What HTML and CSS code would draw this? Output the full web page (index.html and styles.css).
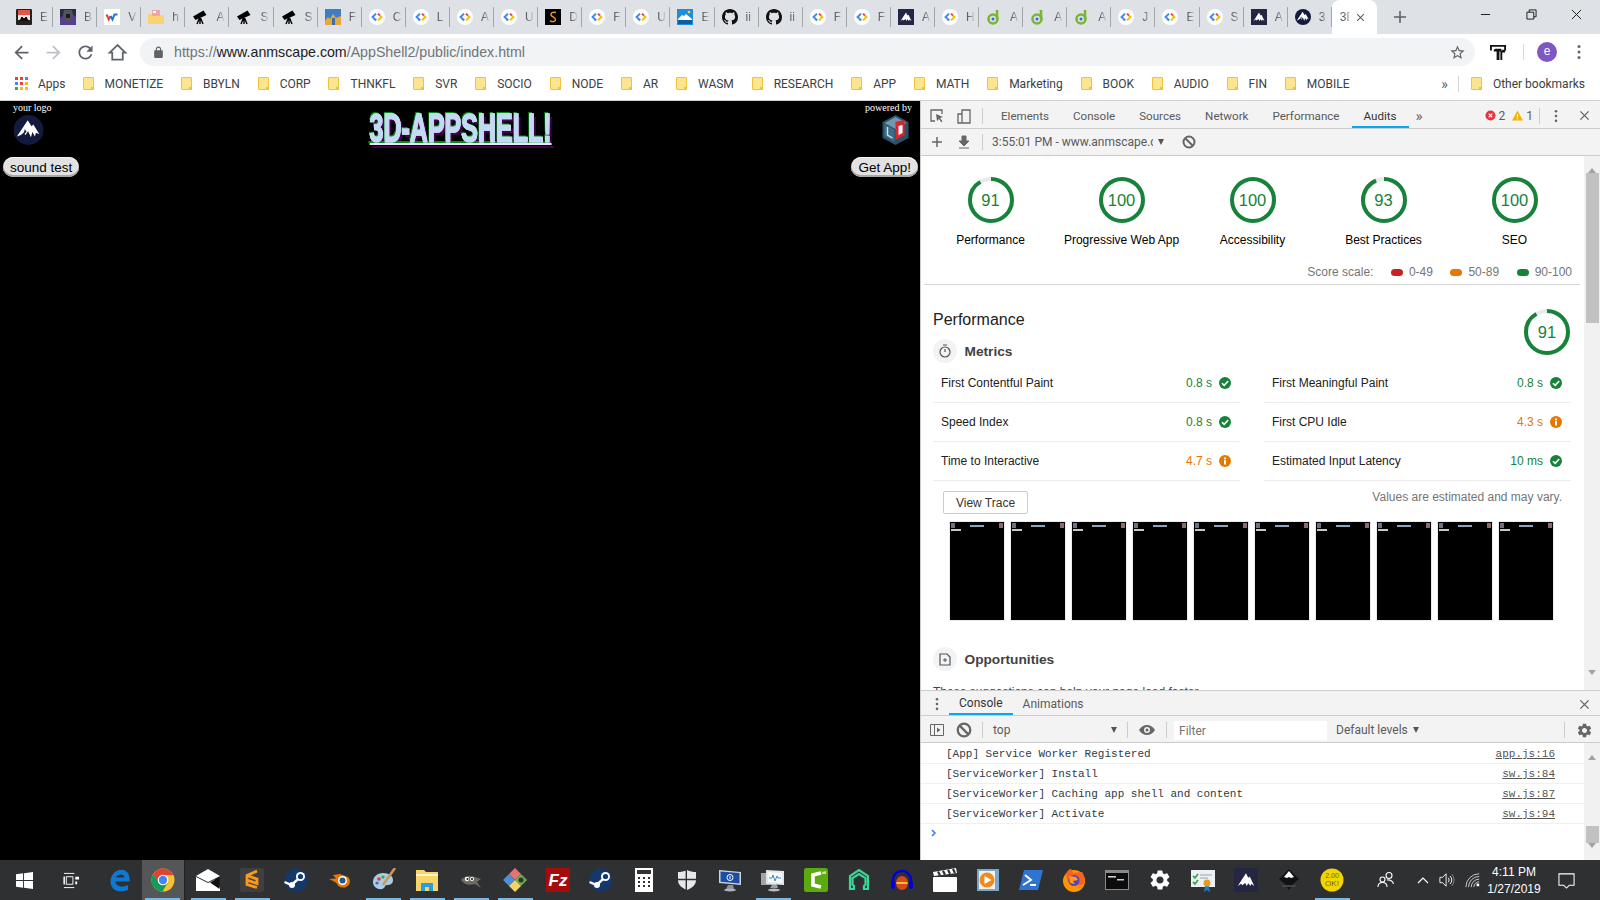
FILE: index.html
```html
<!DOCTYPE html>
<html lang="en">
<head>
  <meta charset="UTF-8">
  <title>3D-APPSHELL!</title>
  <link rel="stylesheet" href="styles.css">
</head>
<body>

  <!-- icon sprite -->
  <svg class="sprite" xmlns="http://www.w3.org/2000/svg">
    <symbol id="f-dev" viewBox="0 0 16 16"><circle cx="8" cy="8" r="8" fill="#fff"/><path d="M7 4.600L3.600 8 7 11.400" fill="none" stroke="#4285f4" stroke-width="2"/><path d="M9 4.600L11 6.600" fill="none" stroke="#ea4335" stroke-width="2"/><path d="M11 6.600L12.400 8 9 11.400" fill="none" stroke="#fbbc05" stroke-width="2"/><path d="M7 11.400L5.800 10.200" fill="none" stroke="#34a853" stroke-width="2"/></symbol>
    <symbol id="f-store" viewBox="0 0 16 16"><rect width="16" height="16" rx="1" fill="#26201f"/><rect x="2" y="1" width="12" height="5" fill="#e2574c"/><rect x="2" y="6" width="12" height="5" fill="#f4e6dc"/><path d="M3 12l2-3h6l2 3z" fill="#111"/><rect x="5" y="8" width="2" height="2" fill="#111"/><rect x="9" y="8" width="2" height="2" fill="#111"/></symbol>
    <symbol id="f-dark" viewBox="0 0 16 16"><rect width="16" height="16" fill="#2b2a44"/><path d="M0 16V9l4-3 4 4 4-5 4 3v8z" fill="#5a3f8f"/><path d="M4 1h8l1 5-3 6H6L3 6z" fill="#51565e"/><path d="M6 5h4v4H6z" fill="#1b1b22"/></symbol>
    <symbol id="f-web" viewBox="0 0 16 16"><rect width="16" height="16" rx="1" fill="#fff"/><path d="M2.500 5.500l2.300 5 1.700-3.500" fill="none" stroke="#e8412f" stroke-width="2"/><path d="M6.500 7l2 3.500 2-5 3 0" fill="none" stroke="#1a73e8" stroke-width="2"/></symbol>
    <symbol id="f-pinkfolder" viewBox="0 0 16 16"><path d="M0 5h6l1 1h9v9H0z" fill="#f9d36f"/><rect x="4" y="1" width="8" height="6" fill="#f3a3a3"/><rect x="5" y="2" width="3" height="2" fill="#fff"/></symbol>
    <symbol id="f-scope" viewBox="0 0 16 16"><path d="M1 7.500L11.500 1.500 14.500 6 3.500 11z" fill="#000"/><path d="M7.500 9L5 15M8 9v6M8.500 9l2.500 6" fill="none" stroke="#000" stroke-width="1.400"/></symbol>
    <symbol id="f-land" viewBox="0 0 16 16"><rect width="16" height="16" fill="#3f7fbf"/><path d="M0 12l3-4 2 2 3-5 3 4 5-2v9H0z" fill="#e8a93c"/><path d="M7 16V9h3v7z" fill="#3f6fa8"/></symbol>
    <symbol id="f-sub" viewBox="0 0 16 16"><rect width="16" height="16" fill="#000"/><path d="M11 3.500C8 2.600 5.500 4 6 6s4.500 2 4.500 4.500S7.500 13 5 12" fill="none" stroke="#f19a1d" stroke-width="1.400"/></symbol>
    <symbol id="f-img" viewBox="0 0 16 16"><rect width="16" height="16" fill="#1f8ed6"/><path d="M1 10l4-4 2 1 2-2 6 5v1H1z" fill="#fff"/><rect x="1" y="11" width="14" height="4" fill="#0d5f9e"/><circle cx="12" cy="3" r="1.300" fill="#ffd54f"/></symbol>
    <symbol id="f-gh" viewBox="0 0 16 16"><path d="M8 0C3.580 0 0 3.580 0 8c0 3.540 2.290 6.530 5.470 7.590.4.07.55-.17.55-.38 0-.19-.01-.82-.01-1.490-2.010.37-2.530-.49-2.690-.94-.09-.23-.48-.94-.82-1.130-.28-.15-.68-.52-.01-.53.63-.01 1.080.58 1.230.82.72 1.210 1.870.87 2.330.66.07-.52.28-.87.51-1.070-1.780-.2-3.640-.89-3.640-3.950 0-.87.31-1.590.82-2.150-.08-.2-.36-1.020.08-2.120 0 0 .67-.21 2.200.82.64-.18 1.320-.27 2-.27.68 0 1.360.09 2 .27 1.530-1.040 2.200-.82 2.200-.82.44 1.100.16 1.920.08 2.120.51.56.82 1.270.82 2.150 0 3.070-1.870 3.750-3.650 3.950.29.25.54.73.54 1.480 0 1.070-.01 1.930-.01 2.200 0 .21.15.46.55.38A8.013 8.013 0 0016 8c0-4.420-3.580-8-8-8z" fill="#111"/></symbol>
    <symbol id="f-logo" viewBox="0 0 16 16"><rect width="16" height="16" fill="#232744"/><path d="M2.500 12L8 3.500l1.500 3 1-.8L13.500 12l-2-1.500-.5 1.500-1.500-1.800-1 1.800-1-2-2 1.500-.8-1z" fill="#fff"/></symbol>
    <symbol id="f-round" viewBox="0 0 16 16"><circle cx="8" cy="8" r="8" fill="#141a3e"/><path d="M1.800 11.500L7.600 2.800l2 3.200 1-1 3.200 5.200-1.800-.8-.6 2-1.300-2.400-.8 2.900-1.500-3.300-1.500 2.200-.6-1.600-1.800 1.400z" fill="#fff"/><path d="M6 7.500l1 1.500-1.600 1.200z" fill="#141a3e"/></symbol>
    <symbol id="f-d" viewBox="0 0 16 16"><path d="M11 1v9" stroke="#7ab536" stroke-width="2.600" fill="none"/><circle cx="7" cy="10" r="4.500" fill="none" stroke="#7ab536" stroke-width="2.600"/><circle cx="7" cy="10" r="1.500" fill="#2a6fd6"/></symbol>
    <symbol id="i-folder" viewBox="0 0 11 13"><rect x=".5" y=".5" width="10" height="12" rx=".5" fill="#fde58f" stroke="#edc33f"/><rect x="8" y="10" width="3" height="3" fill="#edc33f"/></symbol>
    <symbol id="i-check" viewBox="0 0 12 12"><circle cx="6" cy="6" r="6" fill="#178239"/><path d="M3 6.200l2.200 2.200L9.200 4" fill="none" stroke="#fff" stroke-width="1.600"/></symbol>
    <symbol id="i-info" viewBox="0 0 12 12"><circle cx="6" cy="6" r="6" fill="#e67700"/><rect x="5" y="2.500" width="2" height="1.800" fill="#fff"/><rect x="5" y="5.200" width="2" height="4.300" fill="#fff"/></symbol>
    <symbol id="i-x" viewBox="0 0 12 12"><path d="M1.500 1.500l9 9M10.500 1.500l-9 9" fill="none" stroke="currentColor" stroke-width="1.500"/></symbol>
    <symbol id="i-no" viewBox="0 0 14 14"><circle cx="7" cy="7" r="5.500" fill="none" stroke="#666" stroke-width="2"/><path d="M3.200 3.200l7.600 7.600" stroke="#666" stroke-width="2"/></symbol>
    <symbol id="i-dots" viewBox="0 0 4 16"><circle cx="2" cy="2.500" r="1.500" fill="#666"/><circle cx="2" cy="8" r="1.500" fill="#666"/><circle cx="2" cy="13.500" r="1.500" fill="#666"/></symbol>

    <!-- taskbar -->
    <symbol id="t-win" viewBox="0 0 18 18"><path d="M0 2.500L7.500 1.400V8.500H0zM8.500 1.300L18 0V8.500H8.500zM0 9.500H7.500V16.600L0 15.500zM8.500 9.500H18V18L8.500 16.700z" fill="#fff"/></symbol>
    <symbol id="t-view" viewBox="0 0 18 18"><path d="M1 1.500h11M1 16.500h11M3.500 5h7v8h-7zM1 5h.5v8H1z" fill="none" stroke="#fff" stroke-width="1"/><rect x="13" y="5" width="4" height="3" fill="#fff"/><rect x="13" y="10" width="2" height="3" fill="#fff"/></symbol>
    <symbol id="t-edge" viewBox="0 0 24 24"><path d="M21.500 13.500H7.500c.3 4.800 6.800 6.500 12.500 3.500v4.700c-8 3.600-17.500.8-17.500-8C2.500 7 8 1.500 13.500 1.800c5.500.2 8.800 4.500 8 11.700zM16.500 9.500c0-4-7-4.300-8.500 0z" fill="#0f78d4" fill-rule="evenodd"/></symbol>
    <symbol id="t-chrome" viewBox="0 0 24 24"><circle cx="12" cy="12" r="11.500" fill="#fbc02d"/><path d="M12 .5A11.500 11.500 0 002.200 6L7 14.500 12 7h10.400A11.500 11.500 0 0012 .5z" fill="#db4437"/><path d="M2.200 6A11.500 11.500 0 0011.500 23.500L16.500 15H8z" fill="#0f9d58"/><circle cx="12" cy="12" r="5.300" fill="#fff"/><circle cx="12" cy="12" r="4.200" fill="#4285f4"/></symbol>
    <symbol id="t-mail" viewBox="0 0 24 24"><path d="M0 8L12 1l12 7-12 6z" fill="#fff"/><path d="M0 9l12 6 7-3.500L24 20v3H0z" fill="#fff"/><path d="M14 14.500l9.500-5.500v12z" fill="#111"/></symbol>
    <symbol id="t-sublime" viewBox="0 0 24 24"><rect width="24" height="24" rx="2" fill="#3f3f3f"/><path d="M17 4L7 8.500v4.500l10 3.500V12L7 8.500M7 13v4.500l10 3" transform="translate(0 -1)" fill="none" stroke="#f79a1f" stroke-width="2.800"/></symbol>
    <symbol id="t-steam" viewBox="0 0 24 24"><circle cx="12" cy="12" r="11.500" fill="#14386a"/><path d="M.5 14l7 3 6-5.500 5-2" stroke="#fff" stroke-width="2.400" fill="none"/><circle cx="16.500" cy="8.500" r="4.500" fill="#fff"/><circle cx="16.500" cy="8.500" r="2.600" fill="#14386a"/><circle cx="8" cy="17" r="3" fill="#fff"/></symbol>
    <symbol id="t-blender" viewBox="0 0 24 24"><path d="M1 11l7-.5L5 7l7-1 8 3c3 3 2.500 8-2 10-4 1.500-8 0-9.500-4L5 13z" fill="#ea7600"/><circle cx="14.500" cy="12.500" r="4.500" fill="#fff"/><circle cx="14.500" cy="12.500" r="3" fill="#265787"/></symbol>
    <symbol id="t-paint" viewBox="0 0 24 24"><path d="M11 5C5 5 1 9 1 14s5 8 9 7 2-4 5-4 6-1 6-5-4-7-10-7z" fill="#a9cde6"/><circle cx="7" cy="11" r="1.800" fill="#d83b3b"/><circle cx="11" cy="9" r="1.600" fill="#3f9e4d"/><circle cx="5" cy="15" r="1.600" fill="#2f6fd0"/><path d="M23 0L11 17" stroke="#c89b5b" stroke-width="2.600"/></symbol>
    <symbol id="t-explorer" viewBox="0 0 24 24"><path d="M1 2h8l2 2h12v19H1z" fill="#f6d66b"/><rect x="1" y="6" width="22" height="2" fill="#fff3c4"/><path d="M6 23v-8h12v8h-4v-4h-4v4z" fill="#2c9cdb"/></symbol>
    <symbol id="t-gimp" viewBox="0 0 24 24"><path d="M2 12c3-4 9-5 14-3l6 2-4 3 4 6-6-4c-4 1-9 1-11-1z" fill="#6e6b62"/><circle cx="8" cy="11" r="2.200" fill="#fff"/><circle cx="13" cy="11" r="2" fill="#fff"/><circle cx="8.500" cy="11" r="1" fill="#111"/><circle cx="13" cy="11" r="1" fill="#111"/></symbol>
    <symbol id="t-git" viewBox="0 0 24 24"><path d="M12 0l6 6-6 6-6-6z" fill="#e57373"/><path d="M6 6l6 6-6 6-6-6z" fill="#4a90d9"/><path d="M18 6l6 6-6 6-6-6z" fill="#6fae4c"/><path d="M12 12l6 6-6 6-6-6z" fill="#f2d36b"/><circle cx="18" cy="12" r="2.500" fill="#333"/></symbol>
    <symbol id="t-fz" viewBox="0 0 24 24"><rect width="24" height="24" fill="#a50d0d"/><text x="12" y="18" text-anchor="middle" font-family="Liberation Sans" font-style="italic" font-weight="700" font-size="17" fill="#fff">Fz</text></symbol>
    <symbol id="t-calc" viewBox="0 0 18 24"><rect width="18" height="24" fill="#fff"/><rect x="2" y="2" width="14" height="4" fill="#333"/><path d="M3 9h2v2H3zM8 9h2v2H8zM13 9h2v2h-2zM3 13h2v2H3zM8 13h2v2H8zM13 13h2v2h-2zM3 17h2v2H3zM8 17h2v2H8zM13 17h2v2h-2z" fill="#333"/></symbol>
    <symbol id="t-shield" viewBox="0 0 18 20"><path d="M9 0c3 1.500 6 2 9 2v8c0 5-4 8-9 10-5-2-9-5-9-10V2c3 0 6-.5 9-2z" fill="#e8e8e8"/><path d="M8.300 0v20M0 9.500h18" stroke="#2f3032" stroke-width="1.400"/></symbol>
    <symbol id="t-monitor" viewBox="0 0 24 24"><path d="M1 2l22 2v13L1 15z" fill="#cfd4da"/><path d="M2.500 3.500l19 1.600v10.300L2.500 13.800z" fill="#1b4ea8"/><circle cx="12" cy="9.500" r="3" fill="none" stroke="#fff"/><path d="M12 8v3" stroke="#fff"/><path d="M10 17h5l1 4H8z" fill="#8d9299"/><ellipse cx="12" cy="22" rx="6" ry="1.500" fill="#aeb3b8"/></symbol>
    <symbol id="t-perf" viewBox="0 0 24 24"><rect x="0" y="5" width="15" height="12" fill="#9fa5a9"/><path d="M5 2l18 1v14L5 16z" fill="#e3e6e8"/><path d="M7 4l14 1v10L7 14z" fill="#f6f8f9"/><path d="M8 10h3l1-3 2 6 2-5 1 2h3" fill="none" stroke="#3b8cc4"/><path d="M11 17h5l1 3H9z" fill="#9a9fa4"/><ellipse cx="13" cy="22" rx="6" ry="1.500" fill="#b9bdc1"/></symbol>
    <symbol id="t-cam" viewBox="0 0 24 24"><rect width="24" height="24" rx="2.500" fill="#5aaa10"/><path d="M17 5L9 7v10l8 2" fill="none" stroke="#fff" stroke-width="3.600"/><path d="M18 4l4-1v3h-4z" fill="#c6e68b"/></symbol>
    <symbol id="t-arch" viewBox="0 0 24 24"><path d="M3 21V8l9-6 9 6v13h-4v-3l1.500-1.500V10L12 6l-6.500 4v6.500L7 18v3z" fill="none" stroke="#38d996" stroke-width="2.200"/></symbol>
    <symbol id="t-audacity" viewBox="0 0 24 24"><path d="M3 19v-7a9 9 0 0118 0v7" fill="none" stroke="#0000d8" stroke-width="2.400"/><rect x="1" y="13" width="4" height="8" rx="2" fill="#0000d8"/><rect x="19" y="13" width="4" height="8" rx="2" fill="#0000d8"/><ellipse cx="12" cy="15" rx="6" ry="7" fill="#d8461a"/><path d="M6.500 15h11" stroke="#f4c430" stroke-width="2"/></symbol>
    <symbol id="t-clap" viewBox="0 0 24 24"><rect y="9" width="24" height="15" rx="1" fill="#fff"/><path d="M0 4l23-4 1 5-23 3z" fill="#fff"/><path d="M5 3.500l2 4M10 2.700l2 4M15 1.800l2 4M20 1l2 4" stroke="#2f3032" stroke-width="2.200"/></symbol>
    <symbol id="t-media" viewBox="0 0 24 24"><rect x="1" y="1" width="22" height="22" fill="#7ca7c9"/><rect x="3" y="3" width="16" height="18" fill="#f1f1f1"/><circle cx="11" cy="12" r="7.500" fill="#f18a1c"/><path d="M8.500 8l7 4-7 4z" fill="#fff"/></symbol>
    <symbol id="t-ps" viewBox="0 0 24 24"><path d="M5 2h19l-5 20H0z" fill="#2f74d0"/><path d="M6 7l6 5-8 5M11 17h6" fill="none" stroke="#fff" stroke-width="2"/></symbol>
    <symbol id="t-fox" viewBox="0 0 24 24"><circle cx="12" cy="13" r="11" fill="#ff9500"/><path d="M4 6c1-3 3-5 5-5l2 4 9-1c3 4 3 9 1 13H9c-3-3-5-7-5-11z" fill="#f5631f"/><circle cx="12" cy="12.500" r="5.500" fill="#5e3fbe"/><path d="M7 8l7 1 2 3-5 1 2 3-5-1z" fill="#ff9d1f"/></symbol>
    <symbol id="t-cmd" viewBox="0 0 24 24"><rect width="24" height="20" y="2" fill="#8a8a8a"/><rect x="1" y="5" width="22" height="16" fill="#0c0c0c"/><rect x="3" y="8" width="8" height="1.600" fill="#ccc"/><rect x="12" y="11" width="7" height="1.500" fill="#ccc"/></symbol>
    <symbol id="t-gear" viewBox="0 0 24 24"><path d="M19.140 12.940c.04-.3.06-.61.06-.94 0-.32-.02-.64-.07-.94l2.030-1.580a.49.49 0 00.12-.61l-1.920-3.320a.488.488 0 00-.59-.22l-2.390.96c-.5-.38-1.030-.7-1.620-.94l-.36-2.540a.484.484 0 00-.48-.41h-3.840c-.24 0-.43.17-.47.41l-.36 2.540c-.59.24-1.130.57-1.620.94l-2.390-.96c-.22-.08-.47 0-.59.22L2.740 8.870c-.12.21-.08.47.12.61l2.030 1.580c-.05.3-.09.63-.09.94s.02.64.07.94l-2.030 1.580a.49.49 0 00-.12.61l1.920 3.320c.12.22.37.29.59.22l2.390-.96c.5.38 1.030.7 1.620.94l.36 2.540c.05.24.24.41.48.41h3.840c.24 0 .44-.17.47-.41l.36-2.540c.59-.24 1.130-.56 1.620-.94l2.390.96c.22.08.47 0 .59-.22l1.920-3.320c.12-.22.07-.47-.12-.61l-2.010-1.580zM12 15.600c-1.980 0-3.600-1.620-3.600-3.600s1.620-3.600 3.600-3.600 3.600 1.620 3.600 3.600-1.620 3.600-3.600 3.600z" fill="currentColor"/></symbol>
    <symbol id="t-cert" viewBox="0 0 24 24"><rect y="2" width="24" height="17" fill="#eef1f3"/><path d="M2 8l2 2 3-4M2 14l2 2 3-4" fill="none" stroke="#3fa64a" stroke-width="1.800"/><path d="M9 7h12M9 10h8" stroke="#9aa3aa"/><path d="M14 18l-1 6 3-2 3 2-1-6z" fill="#1f7ac4"/><circle cx="16" cy="15" r="3.500" fill="#e69a1f"/></symbol>
    <symbol id="t-ink" viewBox="0 0 24 24"><path d="M12 1l10 10-6 5-4 6-4-6-6-5z" fill="#111"/><path d="M12 3l5 6-3 1-2-1-2 1-3-1z" fill="#fff"/><path d="M5 18h14" stroke="#444" stroke-width="2"/></symbol>
    <symbol id="t-ok" viewBox="0 0 24 24"><circle cx="12" cy="12" r="11.500" fill="#f2d400"/><text x="12" y="10" text-anchor="middle" font-family="Liberation Sans" font-size="7" fill="#6f6a00">2.00</text><text x="12" y="18" text-anchor="middle" font-family="Liberation Sans" font-size="8" fill="#6f6a00">OK!</text></symbol>
    <symbol id="t-people" viewBox="0 0 18 18"><g fill="none" stroke="#fff" stroke-width="1.100"><circle cx="12" cy="4.500" r="3"/><circle cx="5.500" cy="8.500" r="2.500"/><path d="M1 16c0-3 2-4.500 4.500-4.500S10 13 10 16M10 9c3-.5 6 1 6.500 4"/></g></symbol>
    <symbol id="t-speaker" viewBox="0 0 18 18"><path d="M1 6h3l4-4v14l-4-4H1z" fill="none" stroke="#fff"/><path d="M10.500 6.500a4 4 0 010 5M12.500 4.500a7 7 0 010 9" fill="none" stroke="#fff"/><path d="M14.500 2.500a10 10 0 010 13" fill="none" stroke="#888"/></symbol>
    <symbol id="t-wifi" viewBox="0 0 18 18"><path d="M1 16A15 15 0 0116 1M4 16A12 12 0 0116 4M7 16A9 9 0 0116 7M10 16a6 6 0 016-6" fill="none" stroke="#d8d8d8" transform="translate(0 1)"/><rect x="13" y="13" width="3" height="3" fill="#fff"/></symbol>
    <symbol id="t-action" viewBox="0 0 18 18"><path d="M1 2h16v12h-5l-3 3-3-3H1z" fill="none" stroke="#fff" stroke-width="1.100"/></symbol>
  </svg>

  <!-- BROWSER: tab strip -->
  <div class="tabstrip">
    <div class="tab"><svg class="fav"><use href="#f-store"/></svg><span class="tab-title">E</span></div>
    <div class="tab"><svg class="fav"><use href="#f-dark"/></svg><span class="tab-title">B</span></div>
    <div class="tab"><svg class="fav"><use href="#f-web"/></svg><span class="tab-title">V</span></div>
    <div class="tab"><svg class="fav"><use href="#f-pinkfolder"/></svg><span class="tab-title">h</span></div>
    <div class="tab"><svg class="fav"><use href="#f-scope"/></svg><span class="tab-title">A</span></div>
    <div class="tab"><svg class="fav"><use href="#f-scope"/></svg><span class="tab-title">S</span></div>
    <div class="tab"><svg class="fav"><use href="#f-scope"/></svg><span class="tab-title">S</span></div>
    <div class="tab"><svg class="fav"><use href="#f-land"/></svg><span class="tab-title">F</span></div>
    <div class="tab"><svg class="fav"><use href="#f-dev"/></svg><span class="tab-title">C</span></div>
    <div class="tab"><svg class="fav"><use href="#f-dev"/></svg><span class="tab-title">L</span></div>
    <div class="tab"><svg class="fav"><use href="#f-dev"/></svg><span class="tab-title">A</span></div>
    <div class="tab"><svg class="fav"><use href="#f-dev"/></svg><span class="tab-title">U</span></div>
    <div class="tab"><svg class="fav"><use href="#f-sub"/></svg><span class="tab-title">D</span></div>
    <div class="tab"><svg class="fav"><use href="#f-dev"/></svg><span class="tab-title">F</span></div>
    <div class="tab"><svg class="fav"><use href="#f-dev"/></svg><span class="tab-title">U</span></div>
    <div class="tab"><svg class="fav"><use href="#f-img"/></svg><span class="tab-title">E</span></div>
    <div class="tab"><svg class="fav"><use href="#f-gh"/></svg><span class="tab-title">ii</span></div>
    <div class="tab"><svg class="fav"><use href="#f-gh"/></svg><span class="tab-title">ii</span></div>
    <div class="tab"><svg class="fav"><use href="#f-dev"/></svg><span class="tab-title">F</span></div>
    <div class="tab"><svg class="fav"><use href="#f-dev"/></svg><span class="tab-title">F</span></div>
    <div class="tab"><svg class="fav"><use href="#f-logo"/></svg><span class="tab-title">A</span></div>
    <div class="tab"><svg class="fav"><use href="#f-dev"/></svg><span class="tab-title">H</span></div>
    <div class="tab"><svg class="fav"><use href="#f-d"/></svg><span class="tab-title">A</span></div>
    <div class="tab"><svg class="fav"><use href="#f-d"/></svg><span class="tab-title">A</span></div>
    <div class="tab"><svg class="fav"><use href="#f-d"/></svg><span class="tab-title">A</span></div>
    <div class="tab"><svg class="fav"><use href="#f-dev"/></svg><span class="tab-title">J</span></div>
    <div class="tab"><svg class="fav"><use href="#f-dev"/></svg><span class="tab-title">E</span></div>
    <div class="tab"><svg class="fav"><use href="#f-dev"/></svg><span class="tab-title">S</span></div>
    <div class="tab"><svg class="fav"><use href="#f-logo"/></svg><span class="tab-title">A</span></div>
    <div class="tab"><svg class="fav"><use href="#f-round"/></svg><span class="tab-title">3</span></div>
    <div class="tab-active"><span class="tab-title">3D</span><svg class="tab-close"><use href="#i-x"/></svg></div>
    <svg class="new-tab" viewBox="0 0 12 12"><path d="M6 0v12M0 6h12" stroke="#5f6368" stroke-width="1.600"/></svg>
    <div class="win-controls">
      <svg class="win-btn" viewBox="0 0 12 12"><path d="M1 6h10" stroke="#111"/></svg>
      <svg class="win-btn" viewBox="0 0 12 12"><path d="M1 3.500h7.500V11H1zM3.500 3.500V1H11v7.500H8.500" fill="none" stroke="#111"/></svg>
      <svg class="win-btn" viewBox="0 0 12 12"><path d="M1 1l10 10M11 1L1 11" stroke="#111"/></svg>
    </div>
  </div>

  <!-- BROWSER: address bar -->
  <div class="toolbar">
    <svg class="nav-btn" viewBox="0 0 24 24"><path d="M20 11H7.830l5.590-5.590L12 4l-8 8 8 8 1.410-1.410L7.830 13H20v-2z" fill="#5f6368"/></svg>
    <svg class="nav-btn" viewBox="0 0 24 24"><path d="M4 11h12.170l-5.590-5.590L12 4l8 8-8 8-1.410-1.410L16.170 13H4v-2z" fill="#bdc1c6"/></svg>
    <svg class="nav-btn" viewBox="0 0 24 24"><path d="M17.650 6.350C16.200 4.900 14.210 4 12 4c-4.420 0-7.990 3.580-7.990 8s3.570 8 7.990 8c3.730 0 6.840-2.550 7.730-6h-2.080c-.82 2.330-3.040 4-5.650 4-3.310 0-6-2.690-6-6s2.690-6 6-6c1.660 0 3.140.69 4.220 1.780L13 11h7V4l-2.350 2.350z" fill="#5f6368"/></svg>
    <svg class="nav-btn" viewBox="0 0 24 24"><path d="M12 3.500L3 12h3v8h12v-8h3z" fill="none" stroke="#5f6368" stroke-width="2"/></svg>
    <div class="omnibox">
      <svg class="lock" viewBox="0 0 24 24"><path d="M18 8h-1V6c0-2.760-2.240-5-5-5S7 3.240 7 6v2H6c-1.100 0-2 .9-2 2v10c0 1.100.9 2 2 2h12c1.100 0 2-.9 2-2V10c0-1.100-.9-2-2-2zM9 6c0-1.660 1.340-3 3-3s3 1.340 3 3v2H9V6z" fill="#5f6368"/></svg>
      <span class="url">https://<b>www.anmscape.com</b>/AppShell2/public/index.html</span>
      <svg class="star" viewBox="0 0 24 24"><path d="M22 9.240l-7.190-.62L12 2 9.190 8.630 2 9.240l5.460 4.730L5.820 21 12 17.270 18.180 21l-1.630-7.030L22 9.240zM12 15.400l-3.760 2.270 1-4.280-3.320-2.880 4.380-.38L12 6.100l1.710 4.040 4.380.38-3.320 2.880 1 4.280L12 15.400z" fill="#5f6368"/></svg>
    </div>
    <svg class="ext" viewBox="0 0 18 18"><path d="M0 1h17v6h-2V3H2v4H0zM6 5h6v3h-2v9H7V8H4V6z" fill="#111"/><path d="M13 6h3v3h-3v8h-2V7h2z" fill="#111"/></svg>
    <span class="tool-div"></span>
    <span class="avatar">e</span>
    <svg class="menu-dots"><use href="#i-dots"/></svg>
  </div>

  <!-- BROWSER: bookmarks -->
  <div class="bookmarks">
    <svg class="apps" viewBox="0 0 13 13"><rect width="3" height="3" fill="#ea4335"/><rect x="5" width="3" height="3" fill="#ea4335"/><rect x="10" width="3" height="3" fill="#4285f4"/><rect y="5" width="3" height="3" fill="#4285f4"/><rect x="5" y="5" width="3" height="3" fill="#ea4335"/><rect x="10" y="5" width="3" height="3" fill="#fbbc05"/><rect y="10" width="3" height="3" fill="#34a853"/><rect x="5" y="10" width="3" height="3" fill="#fbbc05"/><rect x="10" y="10" width="3" height="3" fill="#fbbc05"/></svg>
    <span class="bm-apps">Apps</span>
    <div class="bm"><svg class="folder"><use href="#i-folder"/></svg>MONETIZE</div>
    <div class="bm"><svg class="folder"><use href="#i-folder"/></svg>BBYLN</div>
    <div class="bm"><svg class="folder"><use href="#i-folder"/></svg>CORP</div>
    <div class="bm"><svg class="folder"><use href="#i-folder"/></svg>THNKFL</div>
    <div class="bm"><svg class="folder"><use href="#i-folder"/></svg>SVR</div>
    <div class="bm"><svg class="folder"><use href="#i-folder"/></svg>SOCIO</div>
    <div class="bm"><svg class="folder"><use href="#i-folder"/></svg>NODE</div>
    <div class="bm"><svg class="folder"><use href="#i-folder"/></svg>AR</div>
    <div class="bm"><svg class="folder"><use href="#i-folder"/></svg>WASM</div>
    <div class="bm"><svg class="folder"><use href="#i-folder"/></svg>RESEARCH</div>
    <div class="bm"><svg class="folder"><use href="#i-folder"/></svg>APP</div>
    <div class="bm"><svg class="folder"><use href="#i-folder"/></svg>MATH</div>
    <div class="bm"><svg class="folder"><use href="#i-folder"/></svg>Marketing</div>
    <div class="bm"><svg class="folder"><use href="#i-folder"/></svg>BOOK</div>
    <div class="bm"><svg class="folder"><use href="#i-folder"/></svg>AUDIO</div>
    <div class="bm"><svg class="folder"><use href="#i-folder"/></svg>FIN</div>
    <div class="bm"><svg class="folder"><use href="#i-folder"/></svg>MOBILE</div>
    <div class="bm-end">
      <span class="bm-more">»</span>
      <span class="tool-div"></span>
      <div class="bm"><svg class="folder"><use href="#i-folder"/></svg>Other bookmarks</div>
    </div>
  </div>

  <div class="main">

    <!-- the page -->
    <div class="app">
      <div class="brand-col">
        <span class="brand-label">your logo</span>
        <svg class="brand-icon" viewBox="0 0 16 16"><use href="#f-round"/></svg>
        <button class="app-btn">sound test</button>
      </div>
      <h1 class="app-title">3D-APPSHELL!</h1>
      <div class="brand-col brand-right">
        <span class="brand-label">powered by</span>
        <svg class="brand-icon" viewBox="0 0 30 30"><path d="M15 0l13 7v16l-13 7-13-7V7z" fill="#2d5068"/><path d="M15 2l11 6-11 6L4 8z" fill="#6f97ad"/><path d="M4 9l10 6v12L4 21z" fill="#3d6c86"/><path d="M15 7l9-2v15l-9 5z" fill="#d7262b"/><path d="M18 11l4-1v8l-4 2z" fill="#fff"/><path d="M7 12v8l5 3" fill="none" stroke="#cfe0ea" stroke-width="1.400"/></svg>
        <button class="app-btn">Get App!</button>
      </div>
    </div>

    <!-- devtools -->
    <div class="devtools">
      <div class="dt-bar dt-tabs">
        <span class="dt-btn"><svg viewBox="0 0 16 16"><path d="M6 13H2V2h11v4" fill="none" stroke="#666" stroke-width="1.300"/><path d="M7 6l7 3-3 1 2.500 3.500-1.200.8L10 11l-2 2z" fill="#666"/></svg></span>
        <span class="dt-btn"><svg viewBox="0 0 16 16"><path d="M6 2h8v13H6zM6 6H2v9h4" fill="none" stroke="#666" stroke-width="1.300"/></svg></span>
        <span class="dt-div dt-div-first"></span>
        <span class="dt-tab">Elements</span>
        <span class="dt-tab">Console</span>
        <span class="dt-tab">Sources</span>
        <span class="dt-tab">Network</span>
        <span class="dt-tab">Performance</span>
        <span class="dt-tab dt-tab-on">Audits</span>
        <span class="dt-more">»</span>
        <div class="dt-right">
          <svg class="err-icon" viewBox="0 0 12 12"><circle cx="6" cy="6" r="5.500" fill="#e8333a"/><path d="M4 4l4 4M8 4l-4 4" stroke="#fff" stroke-width="1.300"/></svg>
          <span class="err-count">2</span>
          <svg class="err-icon" viewBox="0 0 12 12"><path d="M6 .5L12 11.500H0z" fill="#f4b400"/><path d="M6 4.500v3.500M6 9v1.200" stroke="#fff" stroke-width="1.300"/></svg>
          <span class="err-count">1</span>
          <span class="dt-div"></span>
          <svg class="dt-dots"><use href="#i-dots"/></svg>
          <svg class="dt-close"><use href="#i-x"/></svg>
        </div>
      </div>
      <div class="dt-bar dt-sub">
        <span class="dt-btn"><svg viewBox="0 0 16 16"><path d="M8 3v10M3 8h10" stroke="#666" stroke-width="1.500"/></svg></span>
        <span class="dt-btn"><svg viewBox="0 0 16 16"><path d="M6 2h4v5h3l-5 5-5-5h3zM3 14h10" fill="#666" stroke="#666"/></svg></span>
        <span class="dt-div dt-div-first"></span>
        <span class="report-select">3:55:01 PM - www.anmscape.com</span>
        <span class="caret"></span>
        <svg class="no-icon"><use href="#i-no"/></svg>
      </div>

      <div class="report-wrap">
        <div class="report">
          <div class="gauges">
            <div class="gauge-col">
              <div class="gauge"><svg viewBox="0 0 46 46"><circle class="g-track" cx="23" cy="23" r="21"/><circle class="g-fill" cx="23" cy="23" r="21" stroke-dasharray="120 132"/></svg><span class="g-num">91</span></div>
              <div class="g-label">Performance</div>
            </div>
            <div class="gauge-col">
              <div class="gauge"><svg viewBox="0 0 46 46"><circle class="g-track" cx="23" cy="23" r="21"/><circle class="g-fill" cx="23" cy="23" r="21" stroke-dasharray="132 132"/></svg><span class="g-num">100</span></div>
              <div class="g-label">Progressive Web App</div>
            </div>
            <div class="gauge-col">
              <div class="gauge"><svg viewBox="0 0 46 46"><circle class="g-track" cx="23" cy="23" r="21"/><circle class="g-fill" cx="23" cy="23" r="21" stroke-dasharray="132 132"/></svg><span class="g-num">100</span></div>
              <div class="g-label">Accessibility</div>
            </div>
            <div class="gauge-col">
              <div class="gauge"><svg viewBox="0 0 46 46"><circle class="g-track" cx="23" cy="23" r="21"/><circle class="g-fill" cx="23" cy="23" r="21" stroke-dasharray="123 132"/></svg><span class="g-num">93</span></div>
              <div class="g-label">Best Practices</div>
            </div>
            <div class="gauge-col">
              <div class="gauge"><svg viewBox="0 0 46 46"><circle class="g-track" cx="23" cy="23" r="21"/><circle class="g-fill" cx="23" cy="23" r="21" stroke-dasharray="132 132"/></svg><span class="g-num">100</span></div>
              <div class="g-label">SEO</div>
            </div>
          </div>
          <div class="scale">
            <span>Score scale:</span>
            <span class="scale-item"><i class="pill pill-red"></i>0-49</span>
            <span class="scale-item"><i class="pill pill-orange"></i>50-89</span>
            <span class="scale-item"><i class="pill pill-green"></i>90-100</span>
          </div>

          <div class="cat-head">
            <div>
              <h2 class="cat-title">Performance</h2>
              <div class="group-head"><span class="group-icon"><svg viewBox="0 0 14 14"><circle cx="7" cy="8" r="5" fill="none" stroke="#555" stroke-width="1.200"/><path d="M5 1h4M7 5v3" stroke="#555" stroke-width="1.200"/></svg></span>Metrics</div>
            </div>
            <div class="gauge"><svg viewBox="0 0 46 46"><circle class="g-track" cx="23" cy="23" r="21"/><circle class="g-fill" cx="23" cy="23" r="21" stroke-dasharray="120 132"/></svg><span class="g-num">91</span></div>
          </div>

          <div class="metrics">
            <div class="metric"><span>First Contentful Paint</span><span class="val-good">0.8 s</span><svg class="m-icon"><use href="#i-check"/></svg></div>
            <div class="metric"><span>First Meaningful Paint</span><span class="val-good">0.8 s</span><svg class="m-icon"><use href="#i-check"/></svg></div>
            <div class="metric"><span>Speed Index</span><span class="val-good">0.8 s</span><svg class="m-icon"><use href="#i-check"/></svg></div>
            <div class="metric"><span>First CPU Idle</span><span class="val-avg">4.3 s</span><svg class="m-icon"><use href="#i-info"/></svg></div>
            <div class="metric"><span>Time to Interactive</span><span class="val-avg">4.7 s</span><svg class="m-icon"><use href="#i-info"/></svg></div>
            <div class="metric"><span>Estimated Input Latency</span><span class="val-good">10 ms</span><svg class="m-icon"><use href="#i-check"/></svg></div>
          </div>

          <div class="trace-row">
            <button class="trace-btn">View Trace</button>
            <span class="estimate">Values are estimated and may vary.</span>
          </div>

          <div class="film">
            <div class="thumb"><div class="thumb-top"><i></i><i class="t-title"></i><i class="t-cube"></i></div><i class="t-pill"></i></div>
            <div class="thumb"><div class="thumb-top"><i></i><i class="t-title"></i><i class="t-cube"></i></div><i class="t-pill"></i></div>
            <div class="thumb"><div class="thumb-top"><i></i><i class="t-title"></i><i class="t-cube"></i></div><i class="t-pill"></i></div>
            <div class="thumb"><div class="thumb-top"><i></i><i class="t-title"></i><i class="t-cube"></i></div><i class="t-pill"></i></div>
            <div class="thumb"><div class="thumb-top"><i></i><i class="t-title"></i><i class="t-cube"></i></div><i class="t-pill"></i></div>
            <div class="thumb"><div class="thumb-top"><i></i><i class="t-title"></i><i class="t-cube"></i></div><i class="t-pill"></i></div>
            <div class="thumb"><div class="thumb-top"><i></i><i class="t-title"></i><i class="t-cube"></i></div><i class="t-pill"></i></div>
            <div class="thumb"><div class="thumb-top"><i></i><i class="t-title"></i><i class="t-cube"></i></div><i class="t-pill"></i></div>
            <div class="thumb"><div class="thumb-top"><i></i><i class="t-title"></i><i class="t-cube"></i></div><i class="t-pill"></i></div>
            <div class="thumb"><div class="thumb-top"><i></i><i class="t-title"></i><i class="t-cube"></i></div><i class="t-pill"></i></div>
          </div>

          <div class="group-head group-opp"><span class="group-icon"><svg viewBox="0 0 14 14"><path d="M2 2h7l3 3v8H2z" fill="none" stroke="#555" stroke-width="1.200"/><path d="M7 6v4M5 8h4" stroke="#555"/></svg></span>Opportunities</div>
          <p class="opp-desc">These suggestions can help your page load faster.</p>
        </div>
        <div class="vbar">
          <span class="sb-up"></span>
          <span class="sb-thumb sb-thumb-report"></span>
          <span class="sb-down sb-down-report"></span>
        </div>
      </div>

      <!-- console drawer -->
      <div class="dt-bar drawer-tabs">
        <svg class="drawer-dots"><use href="#i-dots"/></svg>
        <span class="dt-tab dt-tab-on drawer-tab">Console</span>
        <span class="dt-tab drawer-tab">Animations</span>
        <svg class="dt-close drawer-close"><use href="#i-x"/></svg>
      </div>
      <div class="dt-bar con-bar">
        <span class="dt-btn"><svg viewBox="0 0 16 16"><path d="M1.500 2.500h13v11h-13zM5.500 2.500v11" fill="none" stroke="#666"/><path d="M8 5.500l3.500 2.500L8 10.500z" fill="#666"/></svg></span>
        <span class="dt-btn"><svg class="no-inner"><use href="#i-no"/></svg></span>
        <span class="dt-div dt-div-first"></span>
        <div class="ctx-select"><span>top</span><span class="caret"></span></div>
        <span class="dt-div"></span>
        <svg class="eye" viewBox="0 0 16 16"><path d="M0 8c2-3.500 5-5 8-5s6 1.500 8 5c-2 3.500-5 5-8 5s-6-1.500-8-5z" fill="#666"/><circle cx="8" cy="8" r="3" fill="#f3f3f3"/><circle cx="8" cy="8" r="1.500" fill="#666"/></svg>
        <span class="dt-div"></span>
        <span class="filter">Filter</span>
        <span class="levels">Default levels</span>
        <span class="caret"></span>
        <span class="dt-div dt-div-gear"></span>
        <svg class="con-gear"><use href="#t-gear"/></svg>
      </div>
      <div class="con-wrap">
        <div class="con-log">
          <div class="msg"><span>[App] Service Worker Registered</span><a class="msg-src">app.js:16</a></div>
          <div class="msg"><span>[ServiceWorker] Install</span><a class="msg-src">sw.js:84</a></div>
          <div class="msg"><span>[ServiceWorker] Caching app shell and content</span><a class="msg-src">sw.js:87</a></div>
          <div class="msg"><span>[ServiceWorker] Activate</span><a class="msg-src">sw.js:94</a></div>
          <svg class="prompt" viewBox="0 0 6 8"><path d="M1 1l3 3-3 3" fill="none" stroke="#367cf1" stroke-width="1.500"/></svg>
        </div>
        <div class="vbar">
          <span class="sb-up"></span>
          <span class="sb-thumb sb-thumb-con"></span>
          <span class="sb-down"></span>
        </div>
      </div>
    </div>
  </div>

  <!-- windows taskbar -->
  <div class="taskbar">
    <span class="tb-start"><svg class="tb-small"><use href="#t-win"/></svg></span>
    <span class="tb-view"><svg class="tb-small"><use href="#t-view"/></svg></span>
    <div class="tb-group">
      <span class="tb-item"><svg class="tb-icon"><use href="#t-edge"/></svg></span>
      <span class="tb-item tb-active run"><svg class="tb-icon"><use href="#t-chrome"/></svg></span>
      <span class="tb-item run"><svg class="tb-icon"><use href="#t-mail"/></svg></span>
      <span class="tb-item run"><svg class="tb-icon"><use href="#t-sublime"/></svg></span>
      <span class="tb-item"><svg class="tb-icon"><use href="#t-steam"/></svg></span>
      <span class="tb-item"><svg class="tb-icon"><use href="#t-blender"/></svg></span>
      <span class="tb-item run"><svg class="tb-icon"><use href="#t-paint"/></svg></span>
      <span class="tb-item run"><svg class="tb-icon"><use href="#t-explorer"/></svg></span>
      <span class="tb-item run"><svg class="tb-icon"><use href="#t-gimp"/></svg></span>
      <span class="tb-item run"><svg class="tb-icon"><use href="#t-git"/></svg></span>
    </div>
    <div class="tb-group tb-group-b">
      <span class="tb-item"><svg class="tb-icon"><use href="#t-fz"/></svg></span>
      <span class="tb-item"><svg class="tb-icon"><use href="#t-steam"/></svg></span>
      <span class="tb-item"><svg class="tb-icon"><use href="#t-calc"/></svg></span>
      <span class="tb-item"><svg class="tb-icon tb-shield"><use href="#t-shield"/></svg></span>
      <span class="tb-item"><svg class="tb-icon"><use href="#t-monitor"/></svg></span>
      <span class="tb-item run"><svg class="tb-icon"><use href="#t-perf"/></svg></span>
      <span class="tb-item"><svg class="tb-icon"><use href="#t-cam"/></svg></span>
      <span class="tb-item"><svg class="tb-icon"><use href="#t-arch"/></svg></span>
      <span class="tb-item"><svg class="tb-icon"><use href="#t-audacity"/></svg></span>
      <span class="tb-item"><svg class="tb-icon"><use href="#t-clap"/></svg></span>
      <span class="tb-item"><svg class="tb-icon"><use href="#t-media"/></svg></span>
      <span class="tb-item"><svg class="tb-icon"><use href="#t-ps"/></svg></span>
      <span class="tb-item"><svg class="tb-icon"><use href="#t-fox"/></svg></span>
      <span class="tb-item"><svg class="tb-icon"><use href="#t-cmd"/></svg></span>
      <span class="tb-item"><svg class="tb-icon tb-gear"><use href="#t-gear"/></svg></span>
      <span class="tb-item"><svg class="tb-icon"><use href="#t-cert"/></svg></span>
      <span class="tb-item"><svg class="tb-icon"><use href="#f-logo"/></svg></span>
      <span class="tb-item"><svg class="tb-icon"><use href="#t-ink"/></svg></span>
      <span class="tb-item run"><svg class="tb-icon"><use href="#t-ok"/></svg></span>
    </div>
    <div class="tray">
      <svg class="tray-people"><use href="#t-people"/></svg>
      <svg class="tray-chevron" viewBox="0 0 12 8"><path d="M1 7l5-5 5 5" fill="none" stroke="#fff" stroke-width="1.200"/></svg>
      <svg class="tray-speaker"><use href="#t-speaker"/></svg>
      <svg class="tray-wifi"><use href="#t-wifi"/></svg>
      <div class="clock"><span>4:11 PM</span><span>1/27/2019</span></div>
      <svg class="tray-action"><use href="#t-action"/></svg>
    </div>
  </div>

</body>
</html>
```

FILE: styles.css
```css
html, body {
  margin: 0;
  padding: 0;
}
body {
  width: 1600px;
  height: 900px;
  overflow: hidden;
  display: flex;
  flex-direction: column;
  font-family: "Liberation Sans", Arial, sans-serif;
  font-size: 12px;
  background: #000;
}
.sprite { display: none; }

/* browser tabs */
.tabstrip {
  height: 34px;
  flex: none;
  display: flex;
  align-items: center;
  padding-left: 9px;
  background: #dee1e6;
}
.tab {
  width: 44.1px;
  height: 20px;
  box-sizing: border-box;
  flex: none;
  display: flex;
  align-items: center;
  padding-left: 7px;
  border-right: 1px solid #a3a5a8;
}
.fav {
  width: 16px;
  height: 16px;
  flex: none;
}
.tab-title {
  width: 9px;
  margin-left: 8px;
  overflow: hidden;
  white-space: nowrap;
  color: #5f6368;
  -webkit-mask-image: linear-gradient(to right, #000 30%, transparent 100%);
  mask-image: linear-gradient(to right, #000 30%, transparent 100%);
}
.tab-active {
  width: 45px;
  height: 34px;
  flex: none;
  display: flex;
  align-items: center;
  background: #fff;
  border-radius: 8px 8px 0 0;
  color: #444;
}
.tab-active .tab-title {
  width: 10px;
  -webkit-mask-image: linear-gradient(to right, #000 70%, transparent 100%);
  mask-image: linear-gradient(to right, #000 70%, transparent 100%);
}
.tab-close {
  width: 9px;
  height: 9px;
  margin-left: 6px;
  color: #5f6368;
}
.new-tab {
  width: 12px;
  height: 12px;
  margin-left: 17px;
  flex: none;
}
.win-controls {
  margin-left: auto;
  display: flex;
  align-items: center;
  gap: 34.500px;
  padding: 0 18px 5px 0;
}
.win-btn {
  width: 11px;
  height: 11px;
}

/* address bar */
.toolbar {
  height: 34px;
  flex: none;
  box-sizing: border-box;
  display: flex;
  align-items: center;
  padding: 4px 0 2px 11px;
  background: #fff;
}
.nav-btn {
  width: 21px;
  height: 21px;
  flex: none;
  margin-right: 11px;
}
.omnibox {
  width: 1335px;
  height: 28px;
  flex: none;
  box-sizing: border-box;
  margin-left: 1px;
  display: flex;
  align-items: center;
  padding: 0 9px 0 11.500px;
  background: #f1f3f4;
  border-radius: 14px;
}
.lock {
  width: 13px;
  height: 13px;
  flex: none;
}
.url {
  margin-left: 9.500px;
  font-size: 14.200px;
  color: #70757a;
  white-space: nowrap;
}
.url b {
  font-weight: normal;
  color: #202124;
}
.star {
  width: 17px;
  height: 17px;
  margin-left: auto;
}
.ext {
  width: 17px;
  height: 17px;
  margin-left: 15px;
  flex: none;
}
.tool-div {
  width: 1px;
  height: 16px;
  margin-left: 16px;
  background: #d4d6d9;
  flex: none;
}
.avatar {
  width: 20px;
  height: 20px;
  flex: none;
  margin-left: 13px;
  border-radius: 50%;
  background: #7e57c2;
  color: #fff;
  font-size: 12px;
  line-height: 19px;
  text-align: center;
}
.menu-dots {
  width: 4px;
  height: 16px;
  flex: none;
  margin-left: 20px;
}

/* bookmarks */
.bookmarks {
  height: 32px;
  flex: none;
  box-sizing: border-box;
  display: flex;
  align-items: center;
  padding: 0 0 1px 15px;
  background: #fff;
  font-family: Roboto, "Liberation Sans", sans-serif;
  color: #3c4043;
}
.apps {
  width: 13px;
  height: 13px;
  flex: none;
}
.bm-apps {
  margin: 0 17px 0 10px;
}
.bm {
  display: flex;
  align-items: center;
  white-space: nowrap;
  margin-right: 17.800px;
}
.folder {
  width: 11px;
  height: 13px;
  margin-right: 11px;
  flex: none;
}
.bm-end {
  margin-left: auto;
  display: flex;
  align-items: center;
}
.bm-end .bm { margin-right: 15px; }
.bm-end .tool-div {
  margin: 0 12px 0 10px;
}
.bm-more {
  font-size: 14px;
  color: #5f6368;
}

/* main split */
.main {
  flex: 1;
  min-height: 0;
  display: flex;
  border-top: 1px solid #d0d0d0;
}

/* left: the app */
.app {
  width: 920px;
  flex: none;
  box-sizing: border-box;
  display: grid;
  grid-template-columns: 1fr auto 1fr;
  align-items: start;
  padding: 1px 2px 0 3px;
  background: #000;
}
.brand-col {
  display: flex;
  flex-direction: column;
  align-items: flex-start;
}
.brand-right { align-items: flex-end; }
.brand-label {
  margin: 0 0 1px 10px;
  font-family: "Liberation Serif", serif;
  font-size: 10px;
  line-height: 12px;
  color: #fff;
}
.brand-right .brand-label {
  margin: 0 6px 1px 0;
}
.brand-icon {
  width: 31px;
  height: 30px;
  margin-left: 10px;
}
.brand-right .brand-icon {
  margin: 0 7px 0 0;
}
.app-btn {
  height: 20px;
  margin-top: 12px;
  padding: 0 7px;
  border: none;
  border-radius: 10px;
  background: #e2e2e2;
  box-shadow: inset 0 -2px 0 #a8a8a8, inset 0 1px 0 #f5f5f5;
  font-family: "Liberation Sans", sans-serif;
  font-size: 13.500px;
  color: #000;
}
.app-title {
  margin: 6px 0 0;
  font-family: "Liberation Sans", sans-serif;
  font-size: 40px;
  line-height: 40px;
  font-weight: 700;
  color: #c3daf3;
  -webkit-text-stroke: 1.5px #c3daf3;
  text-decoration: underline;
  text-decoration-thickness: 2px;
  text-underline-offset: 1px;
  text-decoration-color: #e8e8f0;
  text-shadow: -2px -2px 0 #0b8a1e, 4px 3px 0 #4a0050;
  transform: scaleX(.625);
}

/* right: devtools */
.devtools {
  flex: 1;
  min-width: 0;
  display: flex;
  flex-direction: column;
  border-left: 1px solid #ccc;
  background: #fff;
}
.dt-bar {
  flex: none;
  box-sizing: border-box;
  display: flex;
  align-items: center;
  background: #f3f3f3;
  border-bottom: 1px solid #ccc;
  font-family: Roboto, "Liberation Sans", sans-serif;
  color: #5a5a5a;
}
.dt-tabs {
  height: 28px;
  padding: 2px 0 0 2px;
  font-size: 11.600px;
}
.dt-sub {
  height: 27px;
  padding-left: 2px;
}
.dt-btn {
  width: 27px;
  height: 16px;
  flex: none;
  display: flex;
  justify-content: center;
}
.dt-btn svg {
  width: 16px;
  height: 16px;
}
.dt-div {
  width: 1px;
  height: 16px;
  background: #ccc;
  flex: none;
}
.dt-div-first {
  margin: 0 6px 0 5px;
}
.dt-tab {
  height: 100%;
  box-sizing: border-box;
  padding: 0 12px;
  display: flex;
  align-items: center;
  white-space: nowrap;
}
.dt-tab-on {
  color: #333;
  border-bottom: 2px solid #03a9f4;
  padding-top: 2px;
}
.dt-more {
  margin-left: 7px;
  font-size: 15px;
  color: #666;
}
.dt-right {
  margin-left: auto;
  display: flex;
  align-items: center;
  font-size: 12px;
}
.err-icon {
  width: 11px;
  height: 11px;
  margin-right: 3px;
}
.err-count {
  margin-right: 7px;
}
.dt-right .dt-div { margin-left: -1px; }
.dt-dots {
  width: 4px;
  height: 14px;
  margin-left: 14px;
}
.dt-close {
  width: 11px;
  height: 11px;
  margin: 0 10px 0 21px;
  color: #666;
}
.report-select {
  width: 161px;
  margin-left: 3px;
  overflow: hidden;
  white-space: nowrap;
}
.caret {
  width: 0;
  height: 0;
  flex: none;
  margin-left: 5px;
  border-left: 3.500px solid transparent;
  border-right: 3.500px solid transparent;
  border-top: 6px solid #555;
}
.no-icon {
  width: 14px;
  height: 14px;
  margin-left: 18px;
}

/* audit report */
.report-wrap {
  flex: 1;
  min-height: 0;
  display: flex;
}
.report {
  flex: 1;
  min-width: 0;
  overflow: hidden;
  color: #212121;
}
.gauges {
  display: flex;
  padding: 21px 0 0 4px;
}
.gauge-col {
  width: 131px;
  display: flex;
  flex-direction: column;
  align-items: center;
}
.gauge {
  width: 46px;
  height: 46px;
  flex: none;
  display: grid;
  place-items: center;
}
.gauge svg {
  grid-area: 1 / 1;
  width: 46px;
  height: 46px;
  transform: rotate(-90deg);
}
.g-track, .g-fill {
  fill: none;
  stroke-width: 4;
}
.g-track { stroke: #e8eaed; }
.g-fill { stroke: #178239; }
.g-num {
  grid-area: 1 / 1;
  font-size: 16.500px;
  color: #178239;
}
.g-label {
  margin-top: 10px;
  line-height: 14px;
  white-space: nowrap;
  color: #000;
}
.scale {
  display: flex;
  justify-content: flex-end;
  gap: 17.500px;
  margin: 18px 4px 0 3px;
  padding: 0 8px 5px 0;
  line-height: 14px;
  color: #757575;
  border-bottom: 1px solid #d8d8d8;
}
.scale-item {
  display: flex;
  align-items: center;
}
.pill {
  width: 12px;
  height: 7px;
  margin-right: 6px;
  border-radius: 4px;
}
.pill-red { background: #c7221f; }
.pill-orange { background: #e67700; }
.pill-green { background: #178239; }
.cat-head {
  height: 79px;
  box-sizing: border-box;
  display: flex;
  justify-content: space-between;
  padding: 25px 14px 0 12px;
}
.cat-head .gauge { margin-top: -1px; }
.cat-title {
  margin: 0;
  font-size: 16px;
  line-height: 20px;
  font-weight: normal;
  color: #212121;
}
.group-head {
  display: flex;
  align-items: center;
  gap: 7.500px;
  margin-top: 9px;
  font-size: 13.700px;
  font-weight: 700;
  color: #424242;
}
.group-icon {
  width: 24px;
  height: 24px;
  display: flex;
  align-items: center;
  justify-content: center;
  border-radius: 50%;
  background: #f1f3f4;
}
.group-icon svg {
  width: 14px;
  height: 14px;
}
.metrics {
  display: grid;
  grid-template-columns: 307px 307px;
  column-gap: 24px;
  padding-left: 12px;
}
.metric {
  height: 39px;
  box-sizing: border-box;
  display: flex;
  align-items: center;
  padding: 0 9px 0 8px;
  border-bottom: 1px solid #ebebeb;
  white-space: nowrap;
}
.metric span:first-child { margin-right: auto; }
.val-good { color: #178239; }
.val-avg { color: #e67700; }
.m-icon {
  width: 12px;
  height: 12px;
  margin-left: 7px;
  flex: none;
}
.trace-row {
  display: flex;
  justify-content: space-between;
  padding: 10px 22px 0 22px;
}
.trace-btn {
  width: 85px;
  height: 23px;
  padding: 0;
  border: 1px solid #ccc;
  border-radius: 2px;
  background: #fff;
  font-family: "Liberation Sans", sans-serif;
  font-size: 12px;
  color: #333;
}
.estimate {
  margin-top: -1px;
  line-height: 14px;
  color: #757575;
}
.film {
  display: flex;
  gap: 5px;
  margin: 7px 0 0 28px;
}
.thumb {
  width: 56px;
  height: 100px;
  box-sizing: border-box;
  flex: none;
  display: flex;
  flex-direction: column;
  padding: 2px 2px 0;
  background: #000;
  outline: 1px solid #ebebeb;
  outline-offset: -1px;
}
.thumb-top {
  display: flex;
  justify-content: space-between;
  align-items: center;
  height: 5px;
}
.thumb-top i {
  width: 4px;
  height: 5px;
  background: #6f7183;
}
.thumb-top i.t-title {
  width: 14px;
  height: 2px;
  background: #8fa4bf;
}
.thumb-top i.t-cube { background: #8b6b6e; }
.t-pill {
  width: 10px;
  height: 2px;
  margin-top: 1px;
  background: #c8c8c8;
}
.group-opp {
  margin: 26px 0 0 12px;
}
.opp-desc {
  margin: 14px 0 0 12px;
  line-height: 14px;
  color: #444;
  white-space: nowrap;
}

/* scrollbars */
.vbar {
  width: 16px;
  flex: none;
  display: flex;
  flex-direction: column;
  align-items: center;
  background: #f1f1f1;
}
.sb-up, .sb-down {
  height: 17px;
  width: 0;
  flex: none;
  box-sizing: border-box;
  border-left: 4px solid transparent;
  border-right: 4px solid transparent;
  border-bottom: 5px solid #a3a3a3;
  border-top: 6px solid transparent;
}
.sb-down {
  border-bottom: 6px solid transparent;
  border-top: 5px solid #a3a3a3;
}
.sb-thumb {
  width: 13px;
  flex: none;
  background: #c1c1c1;
}
.sb-thumb-report { height: 150px; }
.sb-down-report { margin-top: auto; margin-bottom: 3px; }
.sb-thumb-con {
  height: 17px;
  margin: 66px 0 0;
}

/* console drawer */
.drawer-tabs {
  height: 26px;
  border-top: 1px solid #ccc;
  padding: 2px 0 0 14px;
}
.drawer-dots {
  width: 4px;
  height: 14px;
  margin-right: 10px;
}
.drawer-tab {
  padding: 0 10px;
}
.drawer-close { margin-left: auto; }
.con-bar {
  height: 27px;
  padding: 2px 0 0 2px;
}
.no-inner {
  width: 14px;
  height: 14px;
}
.ctx-select {
  width: 138px;
  box-sizing: border-box;
  padding: 0 10px 0 4px;
  display: flex;
  justify-content: space-between;
  align-items: center;
}
.eye {
  width: 16px;
  height: 16px;
  margin: 0 11px;
}
.filter {
  width: 153px;
  height: 19px;
  box-sizing: border-box;
  margin-left: 7px;
  padding-left: 5px;
  background: #fff;
  color: #757575;
  line-height: 20px;
}
.levels {
  margin-left: 9px;
  white-space: nowrap;
}
.dt-div-gear { margin-left: 145px; }
.con-gear {
  width: 17px;
  height: 17px;
  margin-left: 11px;
  color: #666;
}
.con-wrap {
  height: 117px;
  flex: none;
  display: flex;
  background: #fff;
}
.con-log {
  flex: 1;
  min-width: 0;
  padding-top: 1px;
}
.msg {
  height: 20px;
  box-sizing: border-box;
  display: flex;
  justify-content: space-between;
  align-items: center;
  padding: 1px 29px 0 25px;
  border-bottom: 1px solid #f0f0f0;
  font-family: "Liberation Mono", monospace;
  font-size: 11px;
  color: #303942;
}
.msg-src {
  color: #555;
  text-decoration: underline;
}
.prompt {
  display: block;
  width: 6px;
  height: 8px;
  margin: 5px 0 0 10px;
}

/* taskbar */
.taskbar {
  height: 40px;
  flex: none;
  display: flex;
  align-items: stretch;
  background: #2f3032;
  color: #fff;
}
.tb-start {
  width: 48px;
  display: flex;
  align-items: center;
  justify-content: center;
  flex: none;
}
.tb-view {
  width: 46px;
  margin-right: 4px;
  display: flex;
  align-items: center;
  justify-content: center;
  flex: none;
}
.tb-small {
  width: 17px;
  height: 17px;
}
.tb-group {
  display: flex;
  flex: none;
}
.tb-item {
  width: 43.800px;
  flex: none;
  position: relative;
  display: flex;
  align-items: center;
  justify-content: center;
}
.tb-group-b .tb-item { width: 43px; }
.tb-icon {
  width: 24px;
  height: 24px;
}
.tb-shield {
  width: 18px;
  height: 20px;
}
.tb-gear { color: #fff; }
.tb-active {
  background: #555658;
  border-right: 1px solid #222;
  margin-right: 1.800px;
  width: 42px;
}
.run::after {
  content: "";
  position: absolute;
  left: 50%;
  bottom: 0;
  width: 35px;
  height: 2px;
  margin-left: -17.500px;
  background: #76b9ed;
}
.tray {
  margin-left: auto;
  padding-right: 10px;
  display: flex;
  align-items: center;
}
.tray-people {
  width: 18px;
  height: 18px;
  margin-right: 22px;
}
.tray-chevron {
  width: 12px;
  height: 8px;
  margin-right: 10px;
}
.tray-speaker {
  width: 16px;
  height: 16px;
  margin-right: 10px;
}
.tray-wifi {
  width: 16px;
  height: 16px;
}
.clock {
  width: 58px;
  margin: 0 10px 0 4px;
  display: flex;
  flex-direction: column;
  align-items: center;
  gap: 3px;
  line-height: 14px;
  white-space: nowrap;
}
.tray-action {
  width: 17px;
  height: 17px;
  margin-left: 5px;
  margin-right: 15px;
}
```
